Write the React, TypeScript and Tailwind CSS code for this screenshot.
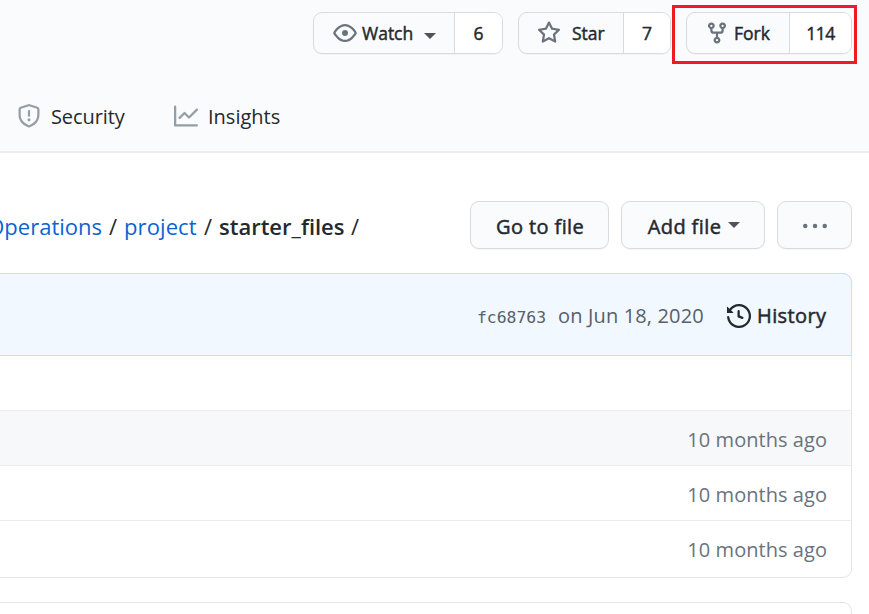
import type { ReactNode } from "react";

const paths = {
  eye: "M1.679 7.932c.412-.621 1.242-1.75 2.366-2.717C5.175 4.242 6.527 3.5 8 3.5c1.473 0 2.824.742 3.955 1.715 1.124.967 1.954 2.096 2.366 2.717a.119.119 0 010 .136c-.412.621-1.242 1.75-2.366 2.717C10.825 11.758 9.473 12.5 8 12.5c-1.473 0-2.824-.742-3.955-1.715C2.92 9.818 2.09 8.69 1.679 8.068a.119.119 0 010-.136zM8 2c-1.981 0-3.67.992-4.933 2.078C1.797 5.169.88 6.423.43 7.1a1.619 1.619 0 000 1.798c.45.678 1.367 1.932 2.637 3.024C4.329 13.008 6.019 14 8 14c1.981 0 3.67-.992 4.933-2.078 1.27-1.091 2.187-2.345 2.637-3.023a1.619 1.619 0 000-1.798c-.45-.678-1.367-1.932-2.637-3.023C11.671 2.992 9.981 2 8 2zm0 8a2 2 0 100-4 2 2 0 000 4z",
  star: "M8 .25a.75.75 0 01.673.418l1.882 3.815 4.21.612a.75.75 0 01.416 1.279l-3.046 2.97.719 4.192a.75.75 0 01-1.088.791L8 12.347l-3.766 1.98a.75.75 0 01-1.088-.79l.72-4.194L.818 6.374a.75.75 0 01.416-1.28l4.21-.611L7.327.668A.75.75 0 018 .25zm0 2.445L6.615 5.5a.75.75 0 01-.564.41l-3.097.45 2.24 2.184a.75.75 0 01.216.664l-.528 3.084 2.769-1.456a.75.75 0 01.698 0l2.77 1.456-.53-3.084a.75.75 0 01.216-.664l2.24-2.183-3.096-.45a.75.75 0 01-.564-.41L8 2.694v.001z",
  fork: "M5 3.25a.75.75 0 11-1.5 0 .75.75 0 011.5 0zm0 2.122a2.25 2.25 0 10-1.5 0v.878A2.25 2.25 0 005.75 8.5h1.5v2.128a2.251 2.251 0 101.5 0V8.5h1.5a2.25 2.25 0 002.25-2.25v-.878a2.25 2.25 0 10-1.5 0v.878a.75.75 0 01-.75.75h-4.5A.75.75 0 015 6.25v-.878zm3.75 7.378a.75.75 0 11-1.5 0 .75.75 0 011.5 0zm3-8.75a.75.75 0 100-1.5.75.75 0 000 1.5z",
  shield: "M7.467.133a1.75 1.75 0 011.066 0l5.25 1.68A1.75 1.75 0 0115 3.48V7c0 1.566-.32 3.182-1.303 4.682-.983 1.498-2.585 2.813-5.032 3.855a1.7 1.7 0 01-1.33 0c-2.447-1.042-4.049-2.357-5.032-3.855C1.32 10.182 1 8.566 1 7V3.48a1.75 1.75 0 011.217-1.667l5.25-1.68zm.61 1.429a.25.25 0 00-.153 0l-5.25 1.68a.25.25 0 00-.174.238V7c0 1.358.275 2.666 1.057 3.86.784 1.194 2.121 2.34 4.366 3.297a.2.2 0 00.154 0c2.245-.956 3.582-2.104 4.366-3.298C13.225 9.666 13.5 8.36 13.5 7V3.48a.25.25 0 00-.174-.237l-5.25-1.68zM9 10.5a1 1 0 11-2 0 1 1 0 012 0zm-.25-5.75a.75.75 0 10-1.5 0v3a.75.75 0 001.5 0v-3z",
  graph: "M1.5 1.75a.75.75 0 00-1.5 0v12.5c0 .414.336.75.75.75h14.5a.75.75 0 000-1.5H1.5V1.75zm14.28 2.53a.75.75 0 00-1.06-1.06L10 7.94 7.53 5.47a.75.75 0 00-1.06 0L3.22 8.72a.75.75 0 001.06 1.06L7 7.06l2.47 2.47a.75.75 0 001.06 0l5.25-5.25z",
  history: "M1.643 3.143L.427 1.927A.25.25 0 000 2.104V5.75c0 .138.112.25.25.25h3.646a.25.25 0 00.177-.427L2.715 4.215a6.5 6.5 0 11-1.18 4.458.75.75 0 10-1.493.154 8.001 8.001 0 101.6-5.684zM7.75 4a.75.75 0 01.75.75v2.992l2.028.812a.75.75 0 01-.557 1.392l-2.5-1A.75.75 0 017 8.25v-3.5A.75.75 0 017.75 4z",
  dots: "M0 8a1.5 1.5 0 103 0 1.5 1.5 0 00-3 0zM6.5 8a1.5 1.5 0 103 0 1.5 1.5 0 00-3 0zM13 8a1.5 1.5 0 103 0 1.5 1.5 0 00-3 0z",
};

function Icon({ name, className = "" }: { name: keyof typeof paths; className?: string }) {
  return (
    <svg viewBox="0 0 16 16" fill="currentColor" className={`size-6 shrink-0 ${className}`}>
      <path fillRule="evenodd" d={paths[name]} />
    </svg>
  );
}

function Caret({ className = "" }: { className?: string }) {
  return <span className={`shrink-0 border-x-[6px] border-t-[6px] border-x-transparent border-t-[#4f5357] ${className}`} />;
}

function CountButton({ className, countClass, count, children }: { className: string; countClass: string; count: string; children: ReactNode }) {
  return (
    <div className={`flex h-[42px] shrink-0 overflow-hidden rounded-[9px] border border-[#d9dcdf] bg-[#fafbfc] text-[17.5px] [-webkit-text-stroke:0.45px] shadow-[0_1px_0_rgba(27,31,35,0.04)] ${className}`}>
      <button className="flex min-w-0 flex-1 items-center whitespace-nowrap">{children}</button>
      <span className={`flex items-center justify-center border-l border-[#d9dcdf] bg-white ${countClass}`}>{count}</span>
    </div>
  );
}

const bigButton =
  "flex h-12 shrink-0 items-center whitespace-nowrap rounded-[9px] border border-[#d9dcdf] bg-[#fafbfc] text-[20px] [-webkit-text-stroke:0.5px] shadow-[0_1px_0_rgba(27,31,35,0.04)]";

export default function App() {
  return (
    <div className="relative h-[614px] w-[869px] overflow-hidden bg-white font-['Open_Sans','Noto_Sans',sans-serif] text-[20px] leading-[30px] text-[#24292e]">
      <header className="flex h-[153px] flex-col border-b-2 border-[#ebedf0] bg-[#fafbfc]">
        <div className="flex pl-[313px] pt-3">
          <CountButton className="w-[190px]" countClass="w-[48px]" count="6">
            <Icon name="eye" className="ml-[19px] text-[#6a737d]" />
            <span className="ml-[5px] w-[51px]">Watch</span>
            <Caret className="ml-[11px] mt-[5px]" />
          </CountButton>
          <CountButton className="ml-[15px] w-[153px]" countClass="w-[47px]" count="7">
            <Icon name="star" className="ml-[18px] text-[#6a737d]" />
            <span className="ml-[11px]">Star</span>
          </CountButton>
          <CountButton className="ml-[15px] w-[166px]" countClass="w-[62px] tracking-[-0.5px]" count="114">
            <Icon name="fork" className="ml-[18px] text-[#6a737d]" />
            <span className="ml-[5px]">Fork</span>
          </CountButton>
        </div>
        <nav className="mt-[46px] flex items-center pl-[17px]">
          <Icon name="shield" className="text-[#959da5]" />
          <span className="ml-[10px] w-[75px] whitespace-nowrap pt-[2px] tracking-[-0.1px]">Security</span>
          <Icon name="graph" className="ml-[48px] text-[#959da5]" />
          <span className="ml-[10px] whitespace-nowrap pt-[2px]">Insights</span>
        </nav>
      </header>

      <div className="mt-12 flex h-12 items-center">
        <div className="flex h-12 w-[470px] items-center whitespace-nowrap pt-[2px] text-[22px]">
          <a className="flex w-[102px] justify-end text-[#0b63d1]">Operations</a>
          <span className="ml-[7px] w-[15px]">/</span>
          <a className="w-[73px] tracking-[0.1px] text-[#0b63d1]">project</a>
          <span className="ml-[7px] w-[15px]">/</span>
          <strong className="w-[126px] font-semibold">starter_files</strong>
          <span className="ml-[6px]">/</span>
        </div>
        <button className={`${bigButton} w-[139px] pl-[25px]`}>
          <span className="pt-[3px] tracking-[0.4px]">Go to file</span>
        </button>
        <button className={`${bigButton} ml-3 w-[144px] pl-[25px]`}>
          <span className="w-[75px] pt-[3px] tracking-[0.4px]">Add file</span>
          <Caret className="ml-[6px]" />
        </button>
        <button className={`${bigButton} ml-3 w-[75px] justify-center pt-[2px]`}>
          <Icon name="dots" className="text-[#6a737d]" />
        </button>
      </div>

      <section className="-ml-4 mt-6 w-[868px] rounded-[9px] border border-[#e1e4e8]">
        <div className="-m-px flex h-[83px] items-center rounded-t-[9px] border border-[#c8dff5] bg-[#f1f8ff] pt-[3px] text-[#586069]">
          <span className="ml-[492px] w-[70px] whitespace-nowrap pt-[3px] font-['DejaVu_Sans_Mono',monospace] text-[16.4px]">fc68763</span>
          <span className="ml-[11px] w-[147px] whitespace-nowrap tracking-[0.15px]">on Jun 18, 2020</span>
          <Icon name="history" className="ml-[22px] text-[#24292e]" />
          <span className="ml-[6px] whitespace-nowrap [-webkit-text-stroke:0.5px] tracking-[0.4px] text-[#24292e]">History</span>
        </div>
        <div className="h-[55px]" />
        {[0, 1, 2].map((i) => (
          <div key={i} className={`flex items-center justify-end whitespace-nowrap border-t border-[#eaecef] pr-6 pt-[3px] tracking-[0.05px] text-[#6a737d] ${i === 2 ? "h-[57px] pb-[2px]" : "h-[55px]"} ${i === 0 ? "bg-[#f6f8fa]" : ""}`}>
            10 months ago
          </div>
        ))}
      </section>
      <section className="-ml-4 mt-6 h-20 w-[868px] rounded-[9px] border border-[#e1e4e8]" />

      <div className="absolute left-[672px] top-[5px] h-[59px] w-[185px] border-[3px] border-[#ed1c24]" />
    </div>
  );
}
